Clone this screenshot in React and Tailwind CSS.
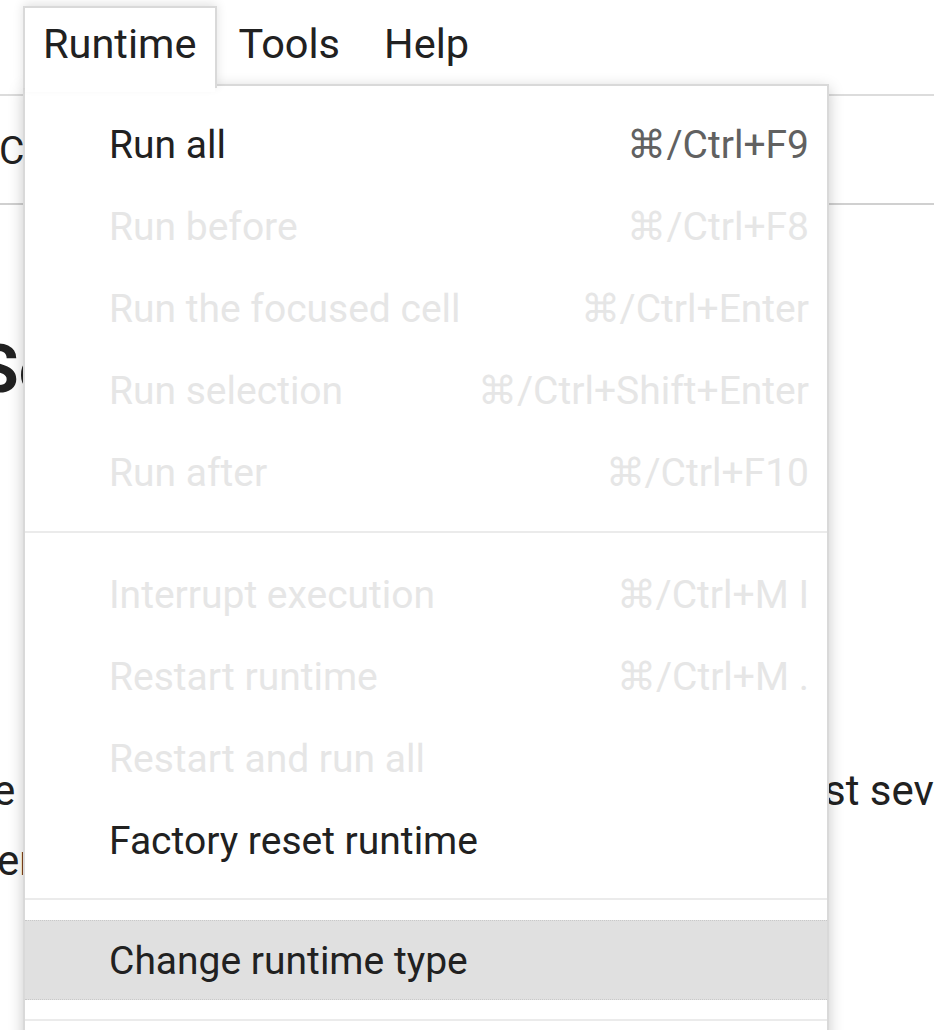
import React from "react";

const groups = [
  [
    { label: "Run all", sc: "⌘/Ctrl+F9", on: true },
    { label: "Run before", sc: "⌘/Ctrl+F8" },
    { label: "Run the focused cell", sc: "⌘/Ctrl+Enter" },
    { label: "Run selection", sc: "⌘/Ctrl+Shift+Enter" },
    { label: "Run after", sc: "⌘/Ctrl+F10" },
  ],
  [
    { label: "Interrupt execution", sc: "⌘/Ctrl+M I" },
    { label: "Restart runtime", sc: "⌘/Ctrl+M ." },
    { label: "Restart and run all", sc: "" },
    { label: "Factory reset runtime", sc: "", on: true },
  ],
];

function Item({ label, sc, on }) {
  return (
    <div className="flex h-[82px] items-center justify-between pl-[84px] pr-[18px] pt-[2px] whitespace-nowrap">
      <span className={on ? "text-[#212121]" : "text-[#e6e6e6]"}>{label}</span>
      <span className={on ? "text-[#616161]" : "text-[#e6e6e6]"}>{sc}</span>
    </div>
  );
}

export default function App() {
  return (
    <div
      className="relative h-[1030px] w-[934px] overflow-hidden bg-white text-[#212121]"
      style={{ fontFamily: "Roboto, 'Noto Sans', sans-serif" }}
    >
      {/* page behind the menu */}
      <div className="flex h-[94px] items-start pl-[43px] pt-[16px] text-[41.5px] leading-[56px] whitespace-nowrap">
        <span>Runtime</span>
        <span className="ml-[42px]">Tools</span>
        <span className="ml-[44px]">Help</span>
      </div>
      <div className="h-[2px] bg-[#dcdcdc]" />
      <div className="flex h-[107px] items-center pt-[4px] text-[39px] whitespace-nowrap">
        <span className="-ml-[1px]">Code</span>
      </div>
      <div className="h-[2px] bg-[#d0d0d0]" />
      <div className="pt-[132px] text-[66px] font-bold leading-none whitespace-nowrap">
        <span className="-ml-[22px]">Setup</span>
      </div>
      <div className="pt-[353px] text-[42px] leading-[70px]">
        <div className="flex whitespace-nowrap">
          <span className="-ml-[7px] w-[836px] shrink-0">e</span>
          <span className="-ml-[5px] shrink-0">st several</span>
        </div>
        <div className="whitespace-nowrap">
          <span className="-ml-[3px]">er</span>
        </div>
      </div>

      {/* open menu overlay */}
      <div className="absolute left-[23px] top-[84px] h-[960px] w-[806px] border-2 border-[#d9d9d9] bg-white text-[39px] shadow-[0_4px_14px_rgba(0,0,0,0.22)]">
        {groups.map((g, gi) => (
          <div key={gi}>
            <div className={gi === 0 ? "pt-[17px] pb-[18px]" : "pt-[20px] pb-[17px]"}>
              {g.map((it) => (
                <Item key={it.label} {...it} />
              ))}
            </div>
            <div className="h-[2px] bg-[#ebebeb]" />
          </div>
        ))}
        <div className="pt-[20px] pb-[19px]">
          <div className="flex h-[80px] items-center whitespace-nowrap border-y border-dotted border-[#c8c8c8] bg-[#e0e0e0] pl-[84px] pr-[18px] pt-[2px]">
            <span>Change runtime type</span>
          </div>
        </div>
        <div className="h-[2px] bg-[#ebebeb]" />
      </div>
      {/* active tab */}
      <div className="absolute left-[23px] top-[6px] h-[82px] w-[194px] border-2 border-b-0 border-[#d9d9d9] bg-white shadow-[0_-2px_10px_rgba(0,0,0,0.12)]" />
      <div className="absolute left-[25px] top-[8px] h-[84px] w-[190px] whitespace-nowrap bg-white pl-[18px] pt-[8px] text-[41.5px] leading-[56px] text-[#212121]">
        Runtime
      </div>
    </div>
  );
}
